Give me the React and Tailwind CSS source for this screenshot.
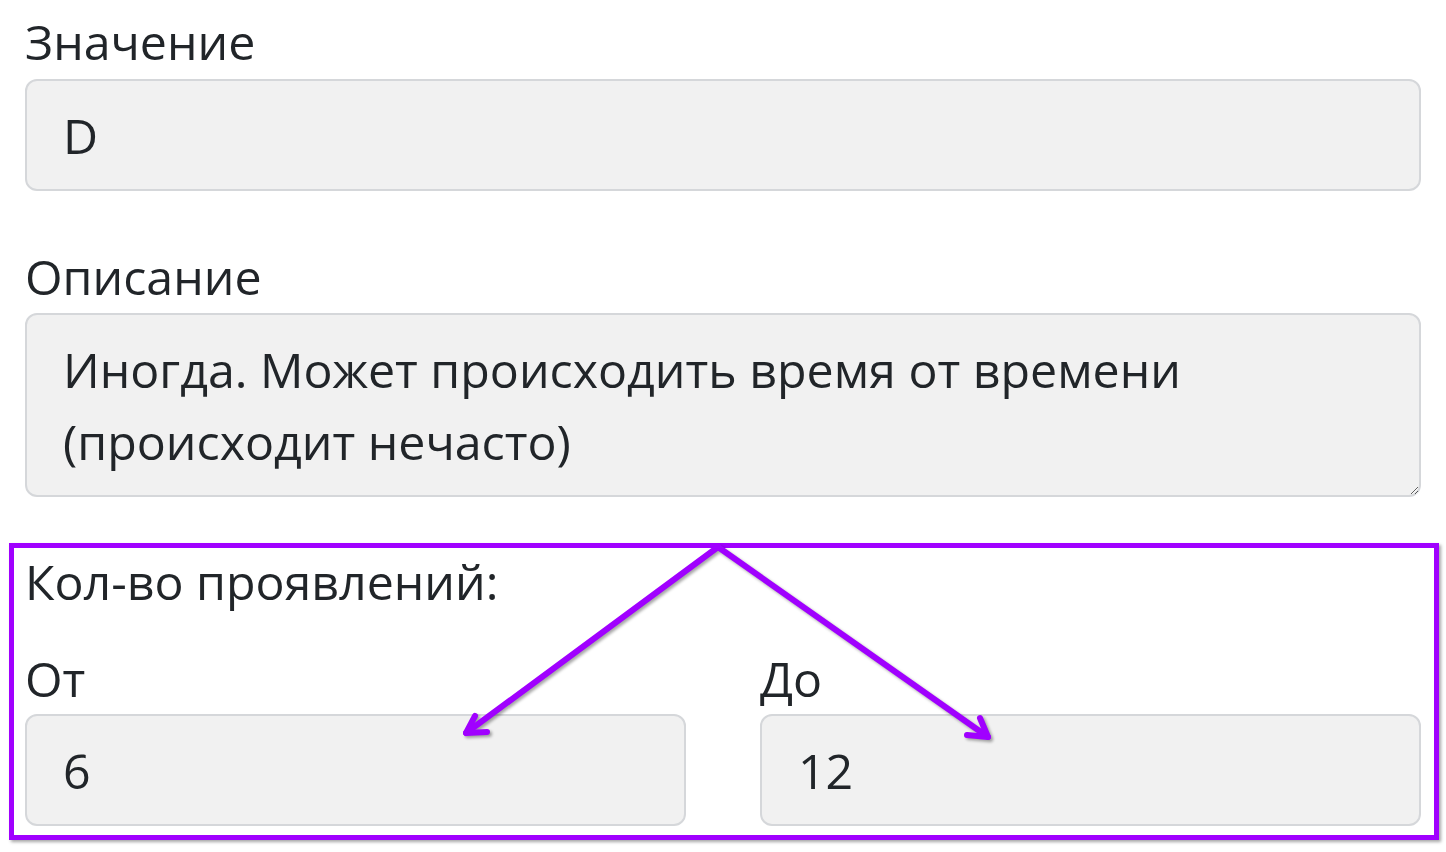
import React from "react";

const inputCls =
  "block w-full h-[112px] rounded-[12px] border-2 border-[#d5d7da] bg-[#f1f1f1] px-[36px] text-[48.3px] leading-[72px] text-[#212529] outline-none";

export default function App() {
  return (
    <div
      className="relative w-[1446px] h-[852px] bg-white overflow-hidden text-[#212529]"
      style={{ fontFamily: '"Open Sans", "Noto Sans", sans-serif' }}
    >
      <div className="flex flex-col px-[25px] pt-[5px]">
        <label className="text-[48.3px] leading-[72px] mb-[2px]">Значение</label>
        <input className={inputCls} readOnly value="D" />

        <label className="text-[48.3px] leading-[72px] mt-[49px] mb-[1px]">Описание</label>
        <textarea
          readOnly
          rows={2}
          className="block w-full h-[184px] rounded-[12px] border-2 border-[#d5d7da] bg-[#f1f1f1] px-[36px] py-[18px] text-[48.3px] leading-[72px] text-[#212529] outline-none"
          value="Иногда. Может происходить время от времени (происходит нечасто)"
        />

        <div className="mt-[48px] text-[48.3px] leading-[72px]">Кол-во проявлений:</div>
        <div className="mt-[25px] flex gap-[74px]">
          <div className="flex-1 flex flex-col">
            <label className="text-[48.3px] leading-[72px]">От</label>
            <input className={inputCls} readOnly value="6" />
          </div>
          <div className="flex-1 flex flex-col">
            <label className="text-[48.3px] leading-[72px]">До</label>
            <input className={inputCls} readOnly value="12" />
          </div>
        </div>
      </div>

      <div className="absolute left-[9px] top-[543px] w-[1430px] h-[297px] border-[5px] border-[#a000ff] shadow-[2px_2px_3px_rgba(0,0,0,0.35)] pointer-events-none" />

      <svg
        className="absolute left-0 top-0 pointer-events-none"
        width="1446"
        height="852"
        style={{ filter: "drop-shadow(2px 2px 1.5px rgba(0,0,0,0.35))" }}
      >
        <g stroke="#a000ff" strokeWidth="6" strokeLinecap="round" strokeLinejoin="round" fill="none">
          <path d="M718 547 L466 733" />
          <path d="M475 716 L466 733 L487 732" />
          <path d="M718 547 L988 737" />
          <path d="M980 718 L988 737 L967 735" />
        </g>
      </svg>
    </div>
  );
}
